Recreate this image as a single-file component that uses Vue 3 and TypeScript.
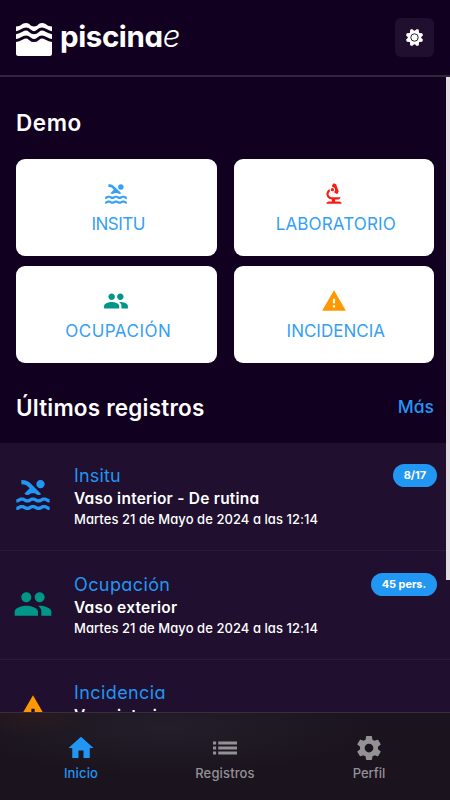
<script setup lang="ts">
interface Action { label: string; icon: string; color: string; spacing: string }
interface Entry { title: string; place: string; date: string; badge?: string; icon: string; color: string; spacing: string }
interface Tab { label: string; icon: string; spacing: string; active?: boolean }

const icons: Record<string, string> = {
  pool: 'M22 21c-1.11 0-1.73-.37-2.18-.64-.37-.22-.6-.36-1.15-.36-.56 0-.78.13-1.15.36-.46.27-1.07.64-2.18.64s-1.73-.37-2.18-.64c-.37-.22-.6-.36-1.15-.36-.56 0-.78.13-1.15.36-.46.27-1.08.64-2.19.64-1.11 0-1.73-.37-2.18-.64-.37-.23-.6-.36-1.15-.36s-.78.13-1.15.36c-.46.27-1.08.64-2.19.64v-2c.56 0 .78-.13 1.15-.36.45-.27 1.07-.64 2.18-.64s1.73.37 2.18.64c.37.23.59.36 1.15.36.56 0 .78-.13 1.15-.36.45-.27 1.07-.64 2.18-.64 1.11 0 1.73.37 2.18.64.37.22.6.36 1.15.36s.78-.13 1.15-.36c.45-.27 1.07-.64 2.18-.64s1.73.37 2.18.64c.37.23.59.36 1.15.36v2zm0-4.5c-1.11 0-1.73-.37-2.18-.64-.37-.22-.6-.36-1.15-.36-.56 0-.78.13-1.15.36-.45.27-1.07.64-2.18.64s-1.73-.37-2.18-.64c-.37-.22-.6-.36-1.15-.36-.56 0-.78.13-1.15.36-.45.27-1.07.64-2.18.64s-1.73-.37-2.18-.64c-.37-.22-.6-.36-1.15-.36s-.78.13-1.15.36c-.47.27-1.09.64-2.2.64v-2c.56 0 .78-.13 1.15-.36.45-.27 1.07-.64 2.18-.64s1.73.37 2.18.64c.37.22.6.36 1.15.36.56 0 .78-.13 1.15-.36.45-.27 1.07-.64 2.18-.64s1.73.37 2.18.64c.37.22.6.36 1.15.36s.78-.13 1.15-.36c.45-.27 1.07-.64 2.18-.64s1.73.37 2.18.64c.37.22.6.36 1.15.36v2zM8.67 12c.56 0 .78-.13 1.15-.36.46-.27 1.08-.64 2.19-.64 1.11 0 1.73.37 2.18.64.37.22.6.36 1.15.36s.78-.13 1.15-.36c.12-.07.26-.15.41-.23L10.48 5C8.93 3.45 7.5 2.99 5 3v2.5c1.82-.01 2.89.39 4 1.5l1 1-3.25 3.25c.31.12.56.27.77.39.37.23.59.36 1.15.36zM19 5.5a2.5 2.5 0 1 1-5 0a2.5 2.5 0 1 1 5 0z',
  biotech: 'M7 19c-1.1 0-2 .9-2 2h14c0-1.1-.9-2-2-2h-4v-2h3c1.1 0 2-.9 2-2h-8c-1.66 0-3-1.34-3-3 0-1.09.59-2.04 1.46-2.56C8.17 9.03 8 8.54 8 8c0-.21.04-.42.09-.62C6.28 8.13 5 9.92 5 12c0 2.76 2.24 5 5 5v2H7zM10.56 5.51C11.91 5.54 13 6.64 13 8c0 .75-.33 1.41-.85 1.87l.59 1.62.94-.34.34.94 1.88-.68-.34-.94.94-.34-2.74-7.52-.94.34-.34-.94-1.88.68.34.94-.94.35.56 1.53zM12 8a1.5 1.5 0 1 1-3 0a1.5 1.5 0 1 1 3 0z',
  people: 'M16 11c1.66 0 2.99-1.34 2.99-3S17.66 5 16 5c-1.66 0-3 1.34-3 3s1.34 3 3 3zm-8 0c1.66 0 2.99-1.34 2.99-3S9.66 5 8 5C6.34 5 5 6.34 5 8s1.34 3 3 3zm0 2c-2.33 0-7 1.17-7 3.5V19h14v-2.5c0-2.33-4.67-3.5-7-3.5zm8 0c-.29 0-.62.02-.97.05 1.16.84 1.97 1.97 1.97 3.45V19h6v-2.5c0-2.33-4.67-3.5-7-3.5z',
  warning: 'M1 21h22L12 2 1 21zm12-3h-2v-2h2v2zm0-4h-2v-4h2v4z',
  home: 'M10 20v-6h4v6h5v-8h3L12 3 2 12h3v8z',
  list: 'M2.400 6.800h2.500v2.400h-2.500zM2.400 10.800h2.500v2.400h-2.500zM2.400 14.800h2.500v2.400h-2.500zM6.600 6.800h15v2.400h-15zM6.600 10.800h15v2.400h-15zM6.600 14.800h15v2.400h-15z',
  settings: 'M19.14 12.94c.04-.3.06-.61.06-.94 0-.32-.02-.64-.07-.94l2.03-1.58c.18-.14.23-.41.12-.61l-1.92-3.32c-.12-.22-.37-.29-.59-.22l-2.39.96c-.5-.38-1.03-.7-1.62-.94l-.36-2.54c-.04-.24-.24-.41-.48-.41h-3.84c-.24 0-.43.17-.47.41l-.36 2.54c-.59.24-1.13.57-1.62.94l-2.39-.96c-.22-.08-.47 0-.59.22L2.74 8.87c-.12.21-.08.47.12.61l2.03 1.58c-.05.3-.07.62-.07.94s.02.64.07.94l-2.03 1.58c-.18.14-.23.41-.12.61l1.92 3.32c.12.22.37.29.59.22l2.39-.96c.5.38 1.03.7 1.62.94l.36 2.54c.05.24.24.41.48.41h3.84c.24 0 .44-.17.47-.41l.36-2.54c.59-.24 1.13-.56 1.62-.94l2.39.96c.22.08.47 0 .59-.22l1.92-3.32c.12-.22.07-.47-.12-.61l-2.01-1.58zM12 15.500c-1.930 0-3.500-1.570-3.500-3.500s1.570-3.500 3.500-3.500 3.500 1.570 3.500 3.500-1.570 3.500-3.500 3.500z',
}

const actions: Action[] = [
  { label: 'INSITU', icon: 'pool', color: 'blue', spacing: 'tight' },
  { label: 'LABORATORIO', icon: 'biotech', color: 'red', spacing: 'slight' },
  { label: 'OCUPACIÓN', icon: 'people', color: 'teal', spacing: 'wide' },
  { label: 'INCIDENCIA', icon: 'warning', color: 'orange', spacing: 'normal' },
]

const date = 'Martes 21 de Mayo de 2024 a las 12:14'
const entries: Entry[] = [
  { title: 'Insitu', place: 'Vaso interior - De rutina', date, badge: '8/17', icon: 'pool', color: 'blue', spacing: 'slight' },
  { title: 'Ocupación', place: 'Vaso exterior', date, badge: '45 pers.', icon: 'people', color: 'teal', spacing: 'medium' },
  { title: 'Incidencia', place: 'Vaso interior', date, icon: 'warning', color: 'orange', spacing: 'medium' },
]

const tabs: Tab[] = [
  { label: 'Inicio', icon: 'home', spacing: 'slight', active: true },
  { label: 'Registros', icon: 'list', spacing: 'slight' },
  { label: 'Perfil', icon: 'settings', spacing: 'normal' },
]

// Eight blunt teeth, offset so that none of them points straight up.
const sunPoints = Array.from({ length: 8 }, (_, i) => {
  const at = (deg: number, r: number) => {
    const a = ((i * 45 + 22.5 + deg) * Math.PI) / 180
    return `${(10 + r * Math.cos(a)).toFixed(2)},${(10 + r * Math.sin(a)).toFixed(2)}`
  }
  return [at(-20, 7), at(-7, 9.3), at(7, 9.3), at(20, 7)].join(' ')
}).join(' ')
</script>

<template>
  <div class="app">
    <header class="header">
      <div class="brand">
        <svg class="logo" viewBox="0 0 36 34">
          <path class="logo-body" d="M0 3.500C5 3.500 6 0 10 0S14 3.500 18 3.500 22 0 26 0 31 3.500 36 3.500V30.500Q36 33 33.500 33H2.500Q0 33 0 30.500Z" />
          <path class="logo-wave" d="M-1 9.700C5 9.700 6 6 10 6S14 9.700 18 9.700 22 6 26 6 31 9.700 37 9.700" />
          <path class="logo-wave" d="M-1 17.600C5 17.600 6 14 10 14S14 17.600 18 17.600 22 14 26 14 31 17.600 37 17.600" />
        </svg>
        <span class="brand-name">piscina<em>e</em></span>
      </div>
      <button class="theme">
        <svg viewBox="0 0 20 20">
          <polygon :points="sunPoints" />
          <circle cx="10" cy="10" r="3.900" />
        </svg>
      </button>
    </header>

    <main class="content">
      <h2 class="demo">Demo</h2>
      <div class="actions">
        <button v-for="a in actions" :key="a.label" class="action">
          <svg viewBox="0 0 24 24" :class="a.color"><path :d="icons[a.icon]" /></svg>
          <span :class="a.spacing">{{ a.label }}</span>
        </button>
      </div>
      <div class="section-head">
        <h2>Últimos registros</h2>
        <a class="more">Más</a>
      </div>
      <ul class="entries">
        <li v-for="e in entries" :key="e.title" class="entry">
          <svg viewBox="0 0 24 24" :class="e.color"><path :d="icons[e.icon]" /></svg>
          <div class="entry-text">
            <div class="entry-title" :class="e.spacing">{{ e.title }}</div>
            <div class="entry-place">{{ e.place }}</div>
            <div class="entry-date">{{ e.date }}</div>
          </div>
          <span v-if="e.badge" class="badge">{{ e.badge }}</span>
        </li>
      </ul>
      <div class="scrollbar"></div>
    </main>

    <nav class="tabs">
      <a v-for="t in tabs" :key="t.label" class="tab" :class="{ active: t.active }">
        <svg viewBox="0 0 24 24"><path :d="icons[t.icon]" /></svg>
        <span :class="t.spacing">{{ t.label }}</span>
      </a>
    </nav>
  </div>
</template>

<style>
body {
  margin: 0;
  background: #120020;
}
</style>

<style scoped>
* {
  box-sizing: border-box;
}
.app {
  width: 450px;
  height: 800px;
  display: flex;
  flex-direction: column;
  overflow: hidden;
  background: #120020;
  color: #fff;
  font-family: Inter, "Open Sans", sans-serif;
  font-feature-settings: "cv11";
}
button {
  border: 0;
  padding: 0;
  font: inherit;
  font-feature-settings: inherit;
}
h2 {
  margin: 0;
  font-size: 22.500px;
  line-height: 30px;
  font-weight: 600;
  letter-spacing: 0.2px;
}
svg {
  display: block;
  fill: currentColor;
}
.header {
  flex: 0 0 77px;
  display: flex;
  align-items: flex-start;
  justify-content: space-between;
  padding: 18px 16px 0;
  border-bottom: 2px solid #30263e;
}
.brand {
  display: flex;
  gap: 8px;
}
.logo {
  width: 36px;
  height: 34px;
  margin-top: 5px;
}
.logo-body {
  fill: #fff;
}
.logo-wave {
  fill: none;
  stroke: #120020;
  stroke-width: 3;
}
.brand-name {
  font-size: 29.500px;
  line-height: 36px;
  font-weight: 700;
  letter-spacing: -0.4px;
}
.brand-name em {
  font-size: 31px;
  font-weight: 300;
}
.theme {
  width: 39px;
  height: 39px;
  display: grid;
  place-items: center;
  border-radius: 6px;
  background: #200f2e;
  color: #fff;
}
.theme svg {
  width: 19px;
  height: 19px;
}
.theme circle {
  stroke: #200f2e;
  stroke-width: 1;
}
.content {
  position: relative;
  flex: 1;
  min-height: 0;
  overflow: hidden;
  padding-top: 31px;
}
.demo {
  padding-left: 16px;
  letter-spacing: 0.6px;
}
.actions {
  display: grid;
  grid-template-columns: 1fr 1fr;
  gap: 10px 17px;
  padding: 21px 16px 0;
}
.action {
  height: 97px;
  display: flex;
  flex-direction: column;
  align-items: center;
  padding-top: 22px;
  border-radius: 9px;
  background: #fff;
}
.action svg {
  width: 26px;
  height: 26px;
}
.action span {
  margin-top: 5px;
  padding-left: 4px;
  font-size: 17px;
  line-height: 25px;
  color: #35a0f5;
}
.tight {
  letter-spacing: -0.5px;
}
.slight {
  letter-spacing: 0.14px;
}
.medium {
  letter-spacing: 0.4px;
}
.wide {
  letter-spacing: 0.49px;
}
.blue {
  color: #2196f3;
}
.action .blue {
  color: #35a0f5;
}
.red {
  color: #f81d15;
}
.teal {
  color: #009688;
}
.orange {
  color: #ff9800;
}
.section-head {
  display: flex;
  justify-content: space-between;
  padding: 30px 16px 19.500px;
}
.more {
  font-size: 17.500px;
  line-height: 28px;
  font-weight: 500;
  color: #2196f3;
}
.entries {
  margin: 0;
  padding: 0;
  list-style: none;
  background: #200f2e;
}
.entry {
  height: 108.500px;
  display: flex;
  align-items: flex-start;
  padding: 20.500px 13px 0 12.500px;
  border-bottom: 1px solid #2a1938;
}
.entry svg {
  width: 40px;
  height: 40px;
  margin-top: 12px;
}
.entry-text {
  flex: 1;
  padding: 1px 0 0 21.500px;
}
.entry-title {
  font-size: 18px;
  line-height: 24px;
  color: #2196f3;
}
.entry-place {
  font-size: 15.500px;
  line-height: 22px;
  font-weight: 600;
  letter-spacing: 0.24px;
}
.entry-date {
  font-size: 13px;
  line-height: 19px;
  font-weight: 500;
  letter-spacing: 0.06px;
}
.badge {
  height: 23px;
  margin-top: 1px;
  padding: 0 11px;
  border-radius: 12px;
  background: #2196f3;
  font-size: 11px;
  line-height: 22px;
  font-weight: 700;
  letter-spacing: -0.08px;
}
.scrollbar {
  position: absolute;
  top: 0;
  right: 0;
  width: 4.500px;
  height: 502.500px;
  background: #e1dfe2;
}
.tabs {
  flex: 0 0 88px;
  display: grid;
  grid-template-columns: repeat(3, 144px);
  justify-content: center;
  border-top: 1px solid #3a2d3d;
  background:
    radial-gradient(ellipse 60px 24px at 32px 0, rgba(70, 34, 10, 0.3), transparent),
    radial-gradient(ellipse 210px 48px at 165px 14px, #231e29, rgba(35, 30, 41, 0)),
    #1b141f;
}
.tab {
  display: flex;
  flex-direction: column;
  align-items: center;
  padding-top: 20px;
  color: #949195;
}
.tab.active {
  color: #2196f3;
}
.tab svg {
  width: 30px;
  height: 30px;
}
.tab span {
  margin-top: 1px;
  font-size: 13px;
  line-height: 19px;
  font-weight: 500;
}
</style>
